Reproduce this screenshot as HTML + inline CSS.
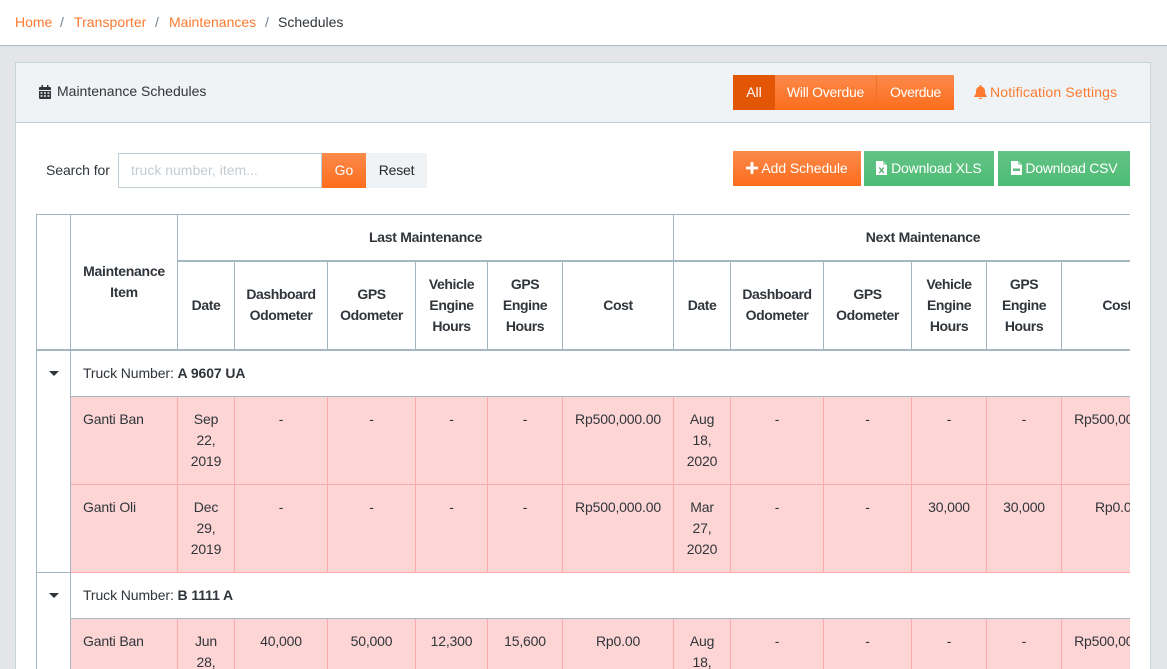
<!DOCTYPE html>
<html><head><meta charset="utf-8"><title>Schedules</title>
<style>
*{box-sizing:border-box}
html,body{margin:0;padding:0;width:1167px;height:669px;overflow:hidden;background:#e3e5e7}
body{font-family:"Liberation Sans",sans-serif;font-size:14px;color:#2f353a;position:relative}
a{color:#fd7a30;text-decoration:none}
.a{position:absolute;white-space:nowrap}
.top{position:absolute;left:0;top:0;width:1167px;height:46px;background:#fff;border-bottom:1px solid #b0bcc4}
.card{position:absolute;left:15px;top:62px;width:1136px;height:607px;background:#fff;border:1px solid #c8d3da;border-bottom:none}
.chead{position:absolute;left:16px;top:63px;width:1134px;height:60px;background:#f0f3f5;border-bottom:1px solid #c2ced6}
.btn{position:absolute;height:35px;line-height:34px;color:#fff;text-align:center;white-space:nowrap}
.or{background:linear-gradient(#fb8a4b,#fd6d1c)}
.gr{background:linear-gradient(#63c286,#4dbd74)}
.btn svg{vertical-align:-2px}
.wrap{position:absolute;left:36px;top:214px;width:1094px;height:455px;overflow:hidden}
table{border-collapse:collapse;table-layout:fixed;width:1136px;margin:0}
td,th{padding:12px;line-height:21px;vertical-align:top;text-align:center;border:1px solid #a4b7c1;font-size:14px;overflow:hidden;letter-spacing:-.17px}
th{vertical-align:middle;font-weight:700;padding:0 10px;letter-spacing:-.28px}
.h2 th{letter-spacing:-.42px}
b{letter-spacing:-.1px}
.h1 th{height:46px;border-bottom-width:2px}
.h2 th{height:89px;border-bottom-width:2px}
.t td{height:46px;background:#fff;text-align:left;border-color:#a4b7c1;white-space:nowrap;letter-spacing:-.1px}
.r td{height:88px;background:#fed5d5;border-color:#fdaaaa}
.r td:first-child{text-align:left}
.r td.n{white-space:nowrap;padding-left:2px;padding-right:2px}
.tog{background:#fff;padding:0;position:relative}
.caret{position:absolute;left:12px;top:20px;width:0;height:0;border-left:5px solid transparent;border-right:5px solid transparent;border-top:5px solid #2f353a}
</style></head><body>
<div class="top"></div>
<div class="a" style="left:15px;top:14px;line-height:16px"><a href="#">Home</a></div>
<div class="a" style="left:60px;top:14px;line-height:16px;color:#73818f">/</div>
<div class="a" style="left:74px;top:14px;line-height:16px;letter-spacing:.05px"><a href="#">Transporter</a></div>
<div class="a" style="left:155px;top:14px;line-height:16px;color:#73818f">/</div>
<div class="a" style="left:169px;top:14px;line-height:16px"><a href="#">Maintenances</a></div>
<div class="a" style="left:265px;top:14px;line-height:16px;color:#73818f">/</div>
<div class="a" style="left:278px;top:14px;line-height:16px">Schedules</div>

<div class="card"></div>
<div class="chead"></div>
<svg class="a" style="left:39px;top:85px" width="12" height="14" viewBox="0 0 12 14"><path fill="#2f353a" fill-rule="evenodd" d="M2.500 0h1.500v2h4V0h1.500v2H11a1 1 0 0 1 1 1v2H0V3a1 1 0 0 1 1-1h1.500zM0 6h12v7a1 1 0 0 1-1 1H1a1 1 0 0 1-1-1zM1.500 7.200v1.600h2V7.200zm3.500 0v1.600h2V7.200zm3.500 0v1.600h2V7.200zM1.500 10.200v1.600h2v-1.600zm3.500 0v1.600h2v-1.600zm3.500 0v1.600h2v-1.600z"/></svg>
<div class="a" style="left:57px;top:83px;line-height:16px">Maintenance Schedules</div>

<div class="btn" style="left:733px;top:75px;width:42px;background:#e35605">All</div>
<div class="btn or" style="left:775px;top:75px;width:102px;border-right:1px solid #f2712a;letter-spacing:-.25px">Will Overdue</div>
<div class="btn or" style="left:877px;top:75px;width:77px;letter-spacing:-.4px">Overdue</div>
<svg class="a" style="left:974px;top:85px" width="13" height="14" viewBox="0 0 13 14"><path fill="#fd7a30" d="M6.500 0a1 1 0 0 1 1 1v.6C9.700 2 11 3.800 11 6c0 3 .7 4 2 5.500V12H0v-.5C1.300 10 2 9 2 6c0-2.200 1.300-4 3.500-4.400V1a1 1 0 0 1 1-1zM4.800 12.700h3.400a1.700 1.300 0 0 1-3.400 0z"/></svg>
<div class="a" style="left:990px;top:84px;line-height:16px;color:#fd7a30;letter-spacing:.17px">Notification Settings</div>

<div class="a" style="left:46px;top:162px;line-height:16px;letter-spacing:-.08px">Search for</div>
<div class="a" style="left:118px;top:153px;width:204px;height:35px;background:#fff;border:1px solid #c2ced6;line-height:33px;padding-left:12px;color:#c3ccd3">truck number, item...</div>
<div class="btn or" style="left:322px;top:153px;width:44px">Go</div>
<div class="btn" style="left:366px;top:153px;width:61px;background:#f0f3f5;color:#23282c;letter-spacing:-.2px">Reset</div>

<div class="btn or" style="left:733px;top:151px;width:128px;letter-spacing:-.08px"><svg width="12" height="12" viewBox="0 0 12 12" style="vertical-align:-1px"><path fill="#fff" d="M4.600 0h2.800v4.600H12v2.800H7.400V12H4.600V7.400H0V4.600h4.600z"/></svg> Add Schedule</div>
<div class="btn gr" style="left:864px;top:151px;width:130px;letter-spacing:-.18px"><svg width="11" height="14" viewBox="0 0 11 14"><path fill="#fff" d="M0 0h7l4 4v10H0z"/><path fill="#a9dfbd" d="M7 0v4h4z"/><path fill="none" stroke="#4cab6d" stroke-width="1.300" d="M3.300 6.500l4.400 5.500M7.700 6.500L3.300 12"/></svg> Download XLS</div>
<div class="btn gr" style="left:998px;top:151px;width:132px;letter-spacing:-.25px"><svg width="11" height="14" viewBox="0 0 11 14"><path fill="#fff" d="M0 0h7l4 4v10H0z"/><path fill="#a9dfbd" d="M7 0v4h4z"/><rect x="2" y="7.500" width="7" height="2.500" fill="#5fb982"/></svg> Download CSV</div>

<div class="wrap">
<table>
<colgroup><col style="width:34px"><col style="width:107px"><col style="width:57px"><col style="width:93px"><col style="width:88px"><col style="width:72px"><col style="width:75px"><col style="width:111px"><col style="width:57px"><col style="width:93px"><col style="width:88px"><col style="width:75px"><col style="width:75px"><col style="width:111px"></colgroup>
<tr class="h1"><th rowspan="2"></th><th rowspan="2">Maintenance Item</th><th colspan="6">Last Maintenance</th><th colspan="6">Next Maintenance</th></tr>
<tr class="h2"><th>Date</th><th>Dashboard Odometer</th><th>GPS Odometer</th><th>Vehicle Engine Hours</th><th>GPS Engine Hours</th><th>Cost</th><th>Date</th><th>Dashboard Odometer</th><th>GPS Odometer</th><th>Vehicle Engine Hours</th><th>GPS Engine Hours</th><th>Cost</th></tr>
<tr class="t"><td class="tog" rowspan="3" style="vertical-align:top"><div style="position:relative;height:46px"><i class="caret"></i></div></td><td colspan="13">Truck Number: <b>A 9607 UA</b></td></tr>
<tr class="r"><td>Ganti Ban</td><td>Sep 22, 2019</td><td>-</td><td>-</td><td>-</td><td>-</td><td class="n">Rp500,000.00</td><td>Aug 18, 2020</td><td>-</td><td>-</td><td>-</td><td>-</td><td class="n">Rp500,000.00</td></tr>
<tr class="r"><td>Ganti Oli</td><td>Dec 29, 2019</td><td>-</td><td>-</td><td>-</td><td>-</td><td class="n">Rp500,000.00</td><td>Mar 27, 2020</td><td>-</td><td>-</td><td>30,000</td><td>30,000</td><td class="n">Rp0.00</td></tr>
<tr class="t"><td class="tog" rowspan="3" style="vertical-align:top"><div style="position:relative;height:46px"><i class="caret"></i></div></td><td colspan="13">Truck Number: <b>B 1111 A</b></td></tr>
<tr class="r"><td>Ganti Ban</td><td>Jun 28, 2019</td><td>40,000</td><td>50,000</td><td>12,300</td><td>15,600</td><td class="n">Rp0.00</td><td>Aug 18, 2020</td><td>-</td><td>-</td><td>-</td><td>-</td><td class="n">Rp500,000.00</td></tr>
</table>
</div>
</body></html>
